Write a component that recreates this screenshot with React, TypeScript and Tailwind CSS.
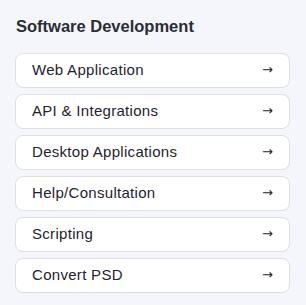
import React from "react";

const items = [
  "Web Application",
  "API & Integrations",
  "Desktop Applications",
  "Help/Consultation",
  "Scripting",
  "Convert PSD",
];

export default function App() {
  return (
    <div
      className="w-[306px] h-[305px] bg-[#f4f6fc] px-[15px] pt-[14px]"
      style={{ fontFamily: '"Liberation Sans", Arial, sans-serif' }}
    >
      <h2 className="pl-[1px] text-[16.5px] leading-[24px] font-bold text-[#2a2d33]">
        Software Development
      </h2>
      <div className="mt-[15px] flex flex-col gap-[6px] w-[275px]">
        {items.map((t) => (
          <div
            key={t}
            className="h-[35px] flex items-center justify-between bg-white border border-[#dcdfe6] rounded-[8px] pl-[16px] pr-[16px]"
          >
            <span className="text-[15px] tracking-[0.3px] text-[#1f2331] mb-[1px]">{t}</span>
            <span
              className="text-[13px] leading-none text-[#1f2331] mb-[3px]"
              style={{ fontFamily: '"DejaVu Sans", sans-serif' }}
            >
              →
            </span>
          </div>
        ))}
      </div>
    </div>
  );
}
